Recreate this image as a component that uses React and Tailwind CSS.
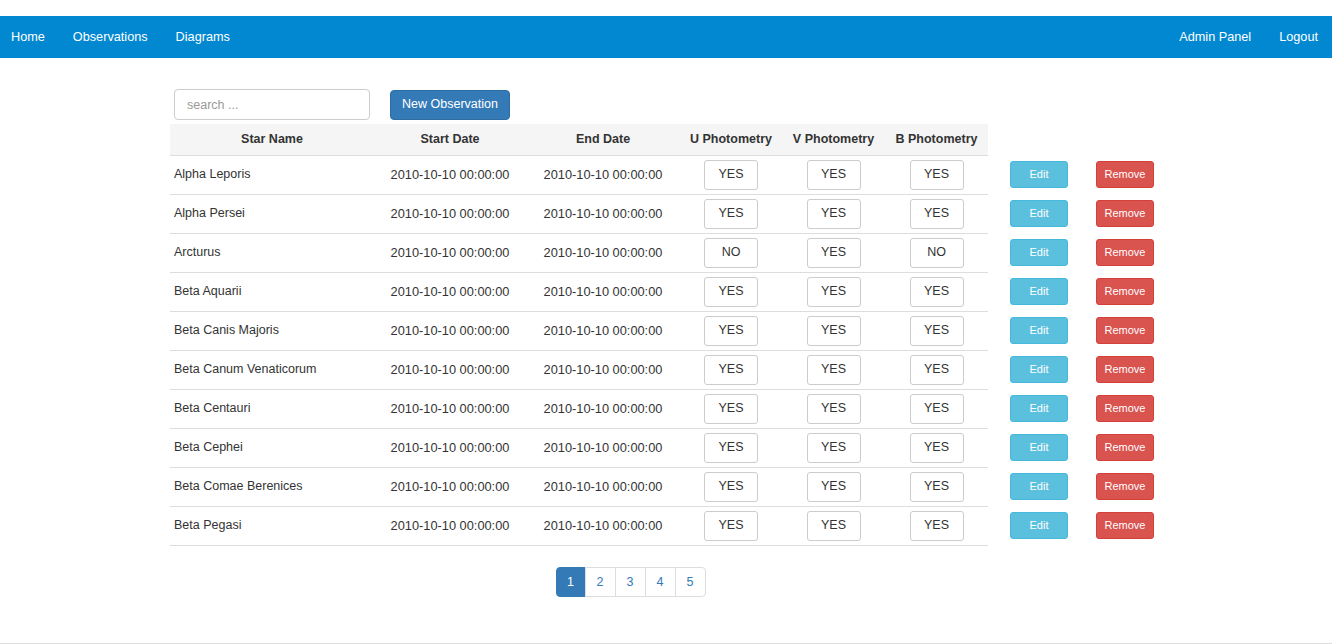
import React from 'react';

const stars = [
  { name: 'Alpha Leporis', u: 'YES', v: 'YES', b: 'YES' },
  { name: 'Alpha Persei', u: 'YES', v: 'YES', b: 'YES' },
  { name: 'Arcturus', u: 'NO', v: 'YES', b: 'NO' },
  { name: 'Beta Aquarii', u: 'YES', v: 'YES', b: 'YES' },
  { name: 'Beta Canis Majoris', u: 'YES', v: 'YES', b: 'YES' },
  { name: 'Beta Canum Venaticorum', u: 'YES', v: 'YES', b: 'YES' },
  { name: 'Beta Centauri', u: 'YES', v: 'YES', b: 'YES' },
  { name: 'Beta Cephei', u: 'YES', v: 'YES', b: 'YES' },
  { name: 'Beta Comae Berenices', u: 'YES', v: 'YES', b: 'YES' },
  { name: 'Beta Pegasi', u: 'YES', v: 'YES', b: 'YES' },
];

const date = '2010-10-10 00:00:00';

const Flag = ({ value }) => (
  <div className="w-[54px] h-[30px] border border-[#ccc] rounded-[3px] bg-white flex items-center justify-center text-[12.5px] text-[#333]">
    {value}
  </div>
);

const App = () => {
  return (
    <div className="h-[644px] flex flex-col bg-white text-[#333]" style={{ fontFamily: '"Liberation Sans", Arial, sans-serif' }}>
      <div className="h-4" />
      <nav className="h-[42px] pt-[2px] bg-[#0288d1] flex items-center justify-between text-white text-[12.7px]">
        <div className="flex items-center">
          <a className="pl-[11px] pr-[14px]">Home</a>
          <a className="pl-[14px] pr-[14px]">Observations</a>
          <a className="pl-[14px]">Diagrams</a>
        </div>
        <div className="flex items-center">
          <a className="px-[14px]">Admin Panel</a>
          <a className="pl-[14px] pr-[14px]">Logout</a>
        </div>
      </nav>

      <div className="pl-[170px] pt-[31px]">
        <div className="flex items-center pl-1 gap-5">
          <input
            placeholder="search ..."
            className="w-[196px] h-[31px] border border-[#ccc] rounded-[4px] px-3 text-[12.5px] placeholder:text-[#999] outline-none"
          />
          <button className="h-[30px] w-[120px] bg-[#337ab7] border border-[#2e6da4] rounded-[4px] text-white text-[12.5px]">
            New Observation
          </button>
        </div>

        <div className="mt-1 w-[818px]">
          <div className="flex h-[32px] bg-[#f5f5f5] border-b border-[#ddd] items-center font-bold text-[12.5px] text-center">
            <div className="w-[204px]">Star Name</div>
            <div className="w-[152px]">Start Date</div>
            <div className="w-[154px]">End Date</div>
            <div className="w-[102px]">U Photometry</div>
            <div className="w-[103px]">V Photometry</div>
            <div className="w-[103px]">B Photometry</div>
          </div>
        </div>

        {stars.map((s) => (
          <div key={s.name} className="flex items-center">
            <div className="flex w-[818px] h-[39px] items-center border-b border-[#ddd] pb-px">
              <div className="w-[204px] pl-1 text-[12.5px]">{s.name}</div>
              <div className="w-[152px] text-center text-[12.8px]">{date}</div>
              <div className="w-[154px] text-center text-[12.8px]">{date}</div>
              <div className="w-[102px] flex justify-center"><Flag value={s.u} /></div>
              <div className="w-[103px] flex justify-center"><Flag value={s.v} /></div>
              <div className="w-[103px] flex justify-center"><Flag value={s.b} /></div>
            </div>
            <div className="w-[102px] flex justify-center pb-0.5">
              <button className="w-[58px] h-[27px] bg-[#5bc0de] border border-[#46b8da] rounded-[3px] text-white text-[11px]">Edit</button>
            </div>
            <div className="w-[70px] flex justify-center pb-0.5">
              <button className="w-[58px] h-[27px] bg-[#d9534f] border border-[#d43f3a] rounded-[3px] text-white text-[11px]">Remove</button>
            </div>
          </div>
        ))}

        <div className="w-[921px] flex justify-center mt-[21px]">
          <div className="flex text-[12.5px]">
            {[1, 2, 3, 4, 5].map((n) => (
              <a
                key={n}
                className={
                  n === 1
                    ? 'w-[30px] h-[30px] flex items-center justify-center bg-[#337ab7] border border-[#337ab7] text-white rounded-l-[4px]'
                    : `w-[31px] h-[30px] flex items-center justify-center border border-[#ddd] -ml-px text-[#337ab7] bg-white ${n === 5 ? 'rounded-r-[4px]' : ''}`
                }
              >
                {n}
              </a>
            ))}
          </div>
        </div>
      </div>

      <div className="mt-auto border-t border-[#ddd]" />
    </div>
  );
};

export default App;
